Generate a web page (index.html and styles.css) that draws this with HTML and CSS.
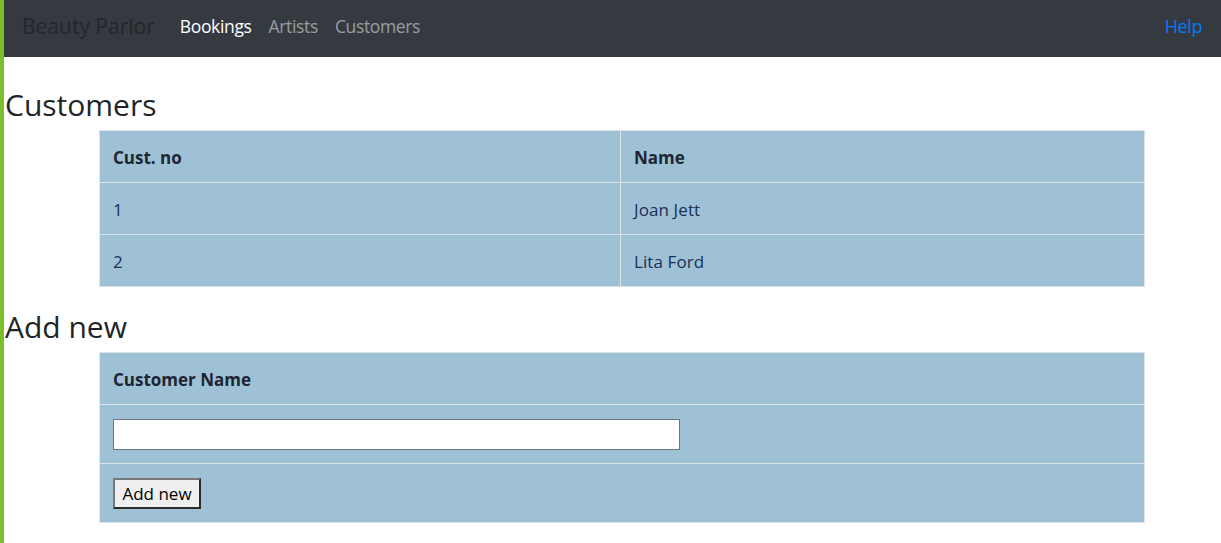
FILE: index.html
```html
<!DOCTYPE html>
<html>
<head>
<meta charset="utf-8">
<link rel="stylesheet" href="styles.css">
</head>
<body>
<div class="page">
  <nav class="navbar">
    <span class="brand">Beauty Parlor</span>
    <a class="nav-link active">Bookings</a>
    <a class="nav-link">Artists</a>
    <a class="nav-link">Customers</a>
    <span class="spacer"></span>
    <a class="help">Help</a>
  </nav>
  <main class="content">
    <h2 class="title">Customers</h2>
    <table class="grid">
      <tr class="row"><th class="cell col1">Cust. no</th><th class="cell">Name</th></tr>
      <tr class="row"><td class="cell col1">1</td><td class="cell">Joan Jett</td></tr>
      <tr class="row"><td class="cell col1">2</td><td class="cell">Lita Ford</td></tr>
    </table>
    <h2 class="title title2">Add new</h2>
    <table class="grid">
      <tr class="row"><th class="cell">Customer Name</th></tr>
      <tr class="row tall"><td class="cell"><input class="text-input" type="text"></td></tr>
      <tr class="row tall"><td class="cell"><button class="btn">Add new</button></td></tr>
    </table>
  </main>
</div>
</body>
</html>
```
FILE: styles.css
```css
html, body {
  margin: 0;
  padding: 0;
  background: #fff;
}
body {
  font-family: "Open Sans", "Noto Sans", sans-serif;
  color: #212529;
  font-size: 16px;
}
.page {
  border-left: 4px solid #7cbf2c;
  min-height: 543px;
  box-sizing: border-box;
}
.navbar {
  display: flex;
  align-items: center;
  height: 57px;
  padding: 0 19px 5px 18px;
  background: #343a40;
  box-sizing: border-box;
}
.brand {
  font-size: 21px;
  color: #23272b;
  margin-right: 25px;
  letter-spacing: 0;
}
.nav-link {
  font-size: 17.5px;
  color: rgba(255, 255, 255, 0.5);
  margin-right: 17px;
  letter-spacing: -0.35px;
}
.nav-link.active {
  color: #fff;
}
.spacer {
  flex: 1;
}
.help {
  font-size: 18px;
  color: #007bff;
  letter-spacing: -0.4px;
}
.content {
  padding-left: 1px;
}
.title {
  font-size: 30px;
  font-weight: 500;
  margin: 0;
  padding-top: 28px;
  line-height: 40px;
  height: 45px;
  letter-spacing: 0;
}
.title2 {
  padding-top: 20px;
  height: 45px;
}
.grid {
  border-collapse: collapse;
  margin-left: 94px;
  width: 1046px;
  background: #9ec1d5;
  border: 1px solid #dde3e8;
}
.row {
  height: 52px;
}
.row.tall {
  height: 59px;
}
.cell {
  border: 1px solid #dde3e8;
  padding: 1px 13px 0;
  text-align: left;
  vertical-align: middle;
  font-size: 17px;
}
td.cell {
  color: #1c2f57;
  letter-spacing: 0.1px;
}
th.cell {
  font-weight: 700;
  color: #1e2533;
  letter-spacing: 0;
}
.col1 {
  width: 494px;
}
.text-input {
  display: block;
  width: 567px;
  height: 31px;
  box-sizing: border-box;
  border: 1px solid #6c7680;
  background: #fff;
  margin: 0;
}
.btn {
  display: block;
  height: 31px;
  width: 88px;
  margin: 0;
  padding: 0;
  font-family: "Open Sans", sans-serif;
  font-size: 17px;
  color: #000;
  background: #efefef;
  border: 2px solid #2b2b2b;
  border-top-color: #777;
  border-left-color: #777;
}
```
